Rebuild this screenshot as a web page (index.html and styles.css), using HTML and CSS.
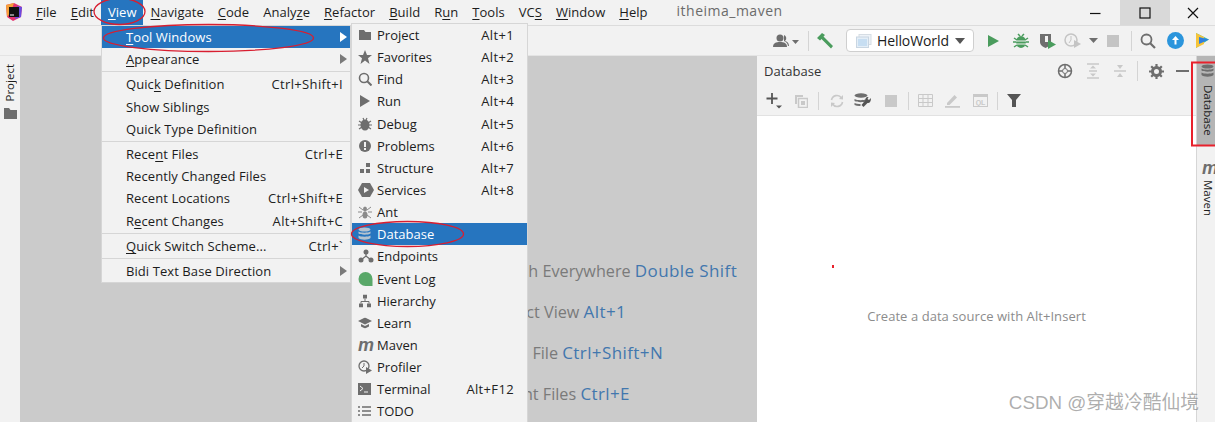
FILE: index.html
```html
<!DOCTYPE html>
<html lang="en">
<head>
<meta charset="utf-8">
<title>itheima_maven</title>
<link rel="stylesheet" href="styles.css">
</head>
<body>
<div class="app">
  <header class="menubar">
    <svg class="logo" width="18" height="18" viewBox="0 0 18 18"><path d="M1 2 L9 0 L17 4 L16 14 L8 18 L2 14Z" fill="#e3326e"/><path d="M1 2 L9 0 L6 9 L2 14Z" fill="#f6a13a"/><path d="M17 4 L16 14 L10 16 L12 3Z" fill="#6a4be0"/><rect x="4" y="4" width="10" height="10" fill="#111"/><rect x="5" y="11.500" width="4" height="1" fill="#fff"/></svg>
    <nav class="menus">
      <span class="menu"><u>F</u>ile</span>
      <span class="menu"><u>E</u>dit</span>
      <span class="menu active"><u>V</u>iew</span>
      <span class="menu"><u>N</u>avigate</span>
      <span class="menu"><u>C</u>ode</span>
      <span class="menu">Analy<u>z</u>e</span>
      <span class="menu"><u>R</u>efactor</span>
      <span class="menu"><u>B</u>uild</span>
      <span class="menu">R<u>u</u>n</span>
      <span class="menu"><u>T</u>ools</span>
      <span class="menu">VC<u>S</u></span>
      <span class="menu"><u>W</u>indow</span>
      <span class="menu"><u>H</u>elp</span>
    </nav>
    <span class="project-title">itheima_maven</span>
    <div class="win-controls">
      <span class="win-btn"><svg width="12" height="12" viewBox="0 0 12 12"><path d="M1 6.500h10.500" stroke="#111" stroke-width="1.200"/></svg></span>
      <span class="win-btn hovered"><svg width="12" height="12" viewBox="0 0 12 12"><rect x="1" y="1" width="10" height="10" fill="none" stroke="#111" stroke-width="1.200"/></svg></span>
      <span class="win-btn"><svg width="12" height="12" viewBox="0 0 12 12"><path d="M1 1l10 10M11 1l-10 10" stroke="#111" stroke-width="1.200"/></svg></span>
    </div>
  </header>

  <div class="toolbar">
    <span class="tool w-user"><svg width="26" height="14" viewBox="0 0 26 14"><circle cx="7" cy="4" r="3.500" fill="#6e6e6e"/><path d="M0 13c0-4 3-5 7-5s7 1 7 5z" fill="#6e6e6e"/><path d="M11 1a3.500 3.500 0 0 1 1 6c2 .5 4 2 4 5h-1c-.5-3-2-4-4-5z" fill="#6e6e6e"/><path d="M19 6h7l-3.500 4z" fill="#6e6e6e"/></svg></span>
    <span class="vsep"></span>
    <span class="tool w-hammer"><svg width="18" height="18" viewBox="0 0 18 18"><path d="M1 6L6 1l3 2-1.500 1.500L17 14l-2 2.500L5.500 7 4 8.500z" fill="#4a9c5d"/></svg></span>
    <div class="run-config">
      <svg width="16" height="14" viewBox="0 0 16 14"><rect x="3" y="0.500" width="12" height="10" fill="#eef3f8" stroke="#d6dde4"/><rect x="0.500" y="3" width="12" height="10.500" fill="#e4eef7" stroke="#c9d6e2"/><rect x="2" y="5" width="9" height="7" fill="#c7def2"/></svg>
      <span class="config-name">HelloWorld</span>
      <svg class="config-arrow" width="10" height="6" viewBox="0 0 10 6"><path d="M0 0h10L5 6z" fill="#555"/></svg>
    </div>
    <span class="tool w-run"><svg width="14" height="14" viewBox="0 0 14 14"><path d="M2 1l11 6-11 6z" fill="#4a9c5d"/></svg></span>
    <span class="tool w-bug"><svg width="16" height="16" viewBox="0 0 16 16"><ellipse cx="8" cy="9" rx="5" ry="6" fill="#4a9c5d"/><path d="M1 5l3 2M15 5l-3 2M0 9h3M16 9h-3M1 14l3-2M15 14l-3-2M5 1l2 2M11 1l-2 2" stroke="#4a9c5d" stroke-width="1.500"/><path d="M3 8h10M3 11h10" stroke="#f2f2f2"/></svg></span>
    <span class="tool w-cov"><svg width="18" height="17" viewBox="0 0 18 17"><path d="M1 2h11v8c0 3-3 5-5.500 6C4 15 1 13 1 10z" fill="#6e6e6e"/><path d="M6 4h3v6H6z" fill="#f2f2f2"/><path d="M9 8l8 4.500-8 4.500z" fill="#4a9c5d"/></svg></span>
    <span class="tool w-prof"><svg width="18" height="16" viewBox="0 0 18 16"><circle cx="7" cy="7" r="6" fill="none" stroke="#c4c4c4" stroke-width="1.500"/><path d="M7 3v4l-2 3" stroke="#c4c4c4" fill="none"/><path d="M10 7l7 4-7 4z" fill="#c4c4c4"/></svg></span>
    <span class="tool w-drop"><svg width="9" height="5" viewBox="0 0 9 5"><path d="M0 0h9L4.500 5z" fill="#6e6e6e"/></svg></span>
    <span class="tool w-stop"><svg width="12" height="12" viewBox="0 0 12 12"><rect width="12" height="12" fill="#c4c4c4"/></svg></span>
    <span class="vsep"></span>
    <span class="tool w-search"><svg width="16" height="16" viewBox="0 0 16 16"><circle cx="6.500" cy="6.500" r="5" fill="none" stroke="#6e6e6e" stroke-width="1.800"/><path d="M10 10l5 5" stroke="#6e6e6e" stroke-width="2.200"/></svg></span>
    <span class="tool w-update"><svg width="17" height="17" viewBox="0 0 17 17"><circle cx="8.500" cy="8.500" r="8.500" fill="#2b95dc"/><path d="M8.500 4l3.500 4H9.500v4.500h-2V8H5z" fill="#fff"/></svg></span>
    <span class="tool w-share"><svg width="15" height="17" viewBox="0 0 15 17"><path d="M1 1l13 6.500L1 16z" fill="#3cc0a0"/><path d="M1 1l8 4v7l-8 4z" fill="#f5c43a"/><path d="M4 5l10 2.500L4 12z" fill="#2f7fe0"/></svg></span>
  </div>

  <main class="workspace">
    <aside class="left-strip">
      <span class="strip-label flip">Project</span>
      <svg width="13" height="11" viewBox="0 0 13 11"><path d="M0 0h5l1.500 2H13v9H0z" fill="#6e6e6e"/></svg>
    </aside>

    <section class="editor">
      <p class="hint">Search Everywhere <span class="key">Double Shift</span></p>
      <p class="hint">Project View <span class="key">Alt+1</span></p>
      <p class="hint">Go to File <span class="key">Ctrl+Shift+N</span></p>
      <p class="hint">Recent Files <span class="key">Ctrl+E</span></p>
    </section>

    <section class="db-panel">
      <div class="panel-head">
        <span class="panel-title">Database</span>
        <div class="panel-actions">
          <svg class="a-target" width="16" height="16" viewBox="0 0 16 16"><circle cx="8" cy="8" r="6.500" fill="none" stroke="#6e6e6e" stroke-width="1.500"/><circle cx="8" cy="8" r="2.500" fill="none" stroke="#6e6e6e"/><path d="M8 1v4M8 11v4M1 8h4M11 8h4" stroke="#6e6e6e" stroke-width="1.500"/></svg>
          <svg class="a-expand" width="14" height="16" viewBox="0 0 14 16"><path d="M1 1h12M1 15h12M3 8h8" stroke="#c9c9c9" stroke-width="1.500"/><path d="M7 2.500l3 3H4zM7 13.500l3-3H4z" fill="#c9c9c9"/></svg>
          <svg class="a-collapse" width="14" height="14" viewBox="0 0 14 14"><path d="M1 7h12" stroke="#c9c9c9" stroke-width="1.500"/><path d="M7 5L4 1h6zM7 9l3 4H4z" fill="#c9c9c9"/></svg>
          <span class="vsep head-sep"></span>
          <svg class="a-gear" width="15" height="15" viewBox="0 0 15 15"><circle cx="7.500" cy="7.500" r="4" fill="none" stroke="#6e6e6e" stroke-width="3"/><path d="M7.500 0v3M7.500 12v3M0 7.500h3M12 7.500h3M2.200 2.200l2 2M10.800 10.800l2 2M12.800 2.200l-2 2M4.200 10.800l-2 2" stroke="#6e6e6e" stroke-width="2.200"/></svg>
          <svg class="a-min" width="13" height="3" viewBox="0 0 13 3"><rect width="13" height="2" fill="#6e6e6e"/></svg>
        </div>
      </div>
      <div class="panel-tools">
        <svg class="t-plus" width="16" height="17" viewBox="0 0 16 17"><path d="M6 1v11M0.500 6.500h11" stroke="#555" stroke-width="1.800"/><path d="M10 13.500h6l-3 3z" fill="#555"/></svg>
        <svg class="t-copy" width="14" height="14" viewBox="0 0 14 14"><path d="M1 1h8v2H3v7H1z" fill="#c9c9c9"/><rect x="4.500" y="4.500" width="9" height="9" fill="none" stroke="#c9c9c9" stroke-width="1.500"/><rect x="7" y="7" width="4" height="4" fill="#c9c9c9"/></svg>
        <span class="vsep tool-sep s1"></span>
        <svg class="t-refresh" width="14" height="14" viewBox="0 0 14 14"><path d="M1.500 6a5.500 5.500 0 0 1 10-2M12.500 8a5.500 5.500 0 0 1-10 2" fill="none" stroke="#c9c9c9" stroke-width="1.600"/><path d="M9 5l4 .5V1zM5 9l-4-.5V13z" fill="#c9c9c9"/></svg>
        <svg class="t-tools" width="18" height="16" viewBox="0 0 18 16"><ellipse cx="7" cy="2.500" rx="6.500" ry="2.200" fill="#6e6e6e"/><path d="M0.500 6c3 1.600 9 1.600 12 0v2c-3 1.600-9 1.600-12 0zM0.500 10c2 1 4 1.200 6 1v2c-2 .2-4 0-6-1z" fill="#6e6e6e"/><path d="M17 5l-2 2-1.500-1 1-2c-2-.5-3.500 1-3 3L7.500 12l2 2 4-4c2 .5 3.500-1 3.500-5z" fill="#555"/></svg>
        <svg class="t-stop" width="12" height="12" viewBox="0 0 12 12"><rect width="12" height="12" fill="#c9c9c9"/></svg>
        <span class="vsep tool-sep s2"></span>
        <svg class="t-table" width="15" height="13" viewBox="0 0 15 13"><path d="M.5.5h14v12H.5zM.5 4.500h14M.5 8.500h14M5 .5v12M10 .5v12" fill="none" stroke="#c9c9c9"/></svg>
        <svg class="t-edit" width="15" height="15" viewBox="0 0 15 15"><path d="M2 10l7.500-8 2.500 2.500L4.500 12H2z" fill="#c9c9c9"/><rect x="0" y="13" width="15" height="1.800" fill="#c9c9c9"/></svg>
        <svg class="t-ql" width="15" height="13" viewBox="0 0 15 13"><rect x=".5" y=".5" width="14" height="12" fill="none" stroke="#c9c9c9"/><rect x=".5" y=".5" width="14" height="2.500" fill="#c9c9c9"/><text x="7.500" y="10.500" class="ql-text">QL</text></svg>
        <span class="vsep tool-sep s3"></span>
        <svg class="t-filter" width="14" height="13" viewBox="0 0 14 13"><path d="M0 0h14L9 6v7H5V6z" fill="#555"/></svg>
      </div>
      <div class="panel-body">Create a data source with Alt+Insert</div>
    </section>

    <aside class="right-strip">
      <div class="strip-tab selected">
        <svg width="13" height="14" viewBox="0 0 13 14"><ellipse cx="6.500" cy="2.500" rx="6" ry="2" fill="#6e6e6e"/><path d="M.5 4.500c2 1.600 10 1.600 12 0v2c-2 1.600-10 1.600-12 0zM.5 8.500c2 1.600 10 1.600 12 0v2.500c-2 2.200-10 2.200-12 0z" fill="#6e6e6e"/></svg>
        <span class="strip-label">Database</span>
      </div>
      <div class="strip-tab">
        <span class="maven-m tab-m">m</span>
        <span class="strip-label">Maven</span>
      </div>
    </aside>
  </main>
</div>

<div class="dropdown view-menu">
  <div class="row selected"><span class="label"><u>T</u>ool Windows</span><i class="arrow light"></i></div>
  <div class="row"><span class="label"><u>A</u>ppearance</span><i class="arrow"></i></div>
  <hr>
  <div class="row"><span class="label">Quic<u>k</u> Definition</span><span class="short">Ctrl+Shift+I</span></div>
  <div class="row"><span class="label">Show Siblings</span></div>
  <div class="row"><span class="label">Quick Type Definition</span></div>
  <hr>
  <div class="row"><span class="label">Rece<u>n</u>t Files</span><span class="short">Ctrl+E</span></div>
  <div class="row"><span class="label">Recently Changed Files</span></div>
  <div class="row"><span class="label">Recent Locations</span><span class="short">Ctrl+Shift+E</span></div>
  <div class="row"><span class="label">R<u>e</u>cent Changes</span><span class="short">Alt+Shift+C</span></div>
  <hr>
  <div class="row"><span class="label"><u>Q</u>uick Switch Scheme...</span><span class="short">Ctrl+`</span></div>
  <hr>
  <div class="row"><span class="label">Bidi Text Base Direction</span><i class="arrow"></i></div>
</div>

<div class="dropdown tool-menu">
  <div class="row"><svg class="ico" width="14" height="12" viewBox="0 0 14 12"><path d="M1 1h5l1.500 2H13v8H1z" fill="#6e6e6e"/></svg><span class="label">Project</span><span class="short">Alt+1</span></div>
  <div class="row"><svg class="ico" width="14" height="14" viewBox="0 0 14 14"><path d="M7 0l2 5h5l-4 3.200L11.500 14 7 10.500 2.500 14 4 8.200 0 5h5z" fill="#6e6e6e"/></svg><span class="label">Favorites</span><span class="short">Alt+2</span></div>
  <div class="row"><svg class="ico" width="14" height="14" viewBox="0 0 14 14"><circle cx="6" cy="6" r="4.500" fill="none" stroke="#6e6e6e" stroke-width="1.600"/><path d="M9 9l4.500 4.500" stroke="#6e6e6e" stroke-width="2"/></svg><span class="label">Find</span><span class="short">Alt+3</span></div>
  <div class="row"><svg class="ico" width="14" height="12" viewBox="0 0 14 12"><path d="M2 0l10 6-10 6z" fill="#6e6e6e"/></svg><span class="label">Run</span><span class="short">Alt+4</span></div>
  <div class="row"><svg class="ico" width="14" height="14" viewBox="0 0 14 14"><ellipse cx="7" cy="8" rx="4.500" ry="5.500" fill="#6e6e6e"/><path d="M1 4l3 2M13 4l-3 2M0 8h3M14 8h-3M1 12l3-2M13 12l-3-2M5 1l1 2M9 1l-1 2" stroke="#6e6e6e" stroke-width="1.200"/></svg><span class="label">Debug</span><span class="short">Alt+5</span></div>
  <div class="row"><svg class="ico" width="14" height="14" viewBox="0 0 14 14"><circle cx="7" cy="7" r="6" fill="#6e6e6e"/><rect x="6" y="3" width="2" height="5" fill="#f2f2f2"/><rect x="6" y="9" width="2" height="2" fill="#f2f2f2"/></svg><span class="label">Problems</span><span class="short">Alt+6</span></div>
  <div class="row"><svg class="ico" width="14" height="12" viewBox="0 0 14 12"><rect x="8" y="1" width="4" height="4" fill="#6e6e6e"/><rect x="2" y="7" width="4" height="4" fill="#6e6e6e"/><rect x="8" y="7" width="4" height="4" fill="#6e6e6e"/></svg><span class="label">Structure</span><span class="short">Alt+7</span></div>
  <div class="row"><svg class="ico" width="16" height="14" viewBox="0 0 16 14"><path d="M4 0h8l4 7-4 7H4L0 7z" fill="#6e6e6e"/><path d="M6 4l5 3-5 3z" fill="#f2f2f2"/></svg><span class="label">Services</span><span class="short">Alt+8</span></div>
  <div class="row"><svg class="ico" width="14" height="14" viewBox="0 0 14 14"><ellipse cx="7" cy="4" rx="2" ry="2.500" fill="#8a8a8a"/><ellipse cx="7" cy="10" rx="2.500" ry="3.500" fill="#8a8a8a"/><path d="M1 2l4 3M13 2L9 5M0 7h4M14 7h-4M1 13l4-3M13 13l-4-3" stroke="#8a8a8a"/></svg><span class="label">Ant</span></div>
  <div class="row selected"><svg class="ico" width="13" height="14" viewBox="0 0 13 14"><ellipse cx="6.500" cy="2.500" rx="6" ry="2" fill="#b4c2cf"/><path d="M.5 4.500c2 1.600 10 1.600 12 0v2c-2 1.600-10 1.600-12 0zM.5 8.500c2 1.600 10 1.600 12 0v2.500c-2 2.200-10 2.200-12 0z" fill="#b4c2cf"/></svg><span class="label">Database</span></div>
  <div class="row"><svg class="ico" width="16" height="14" viewBox="0 0 16 14"><path d="M3 11l5-4 5 4M8 7V3" stroke="#6e6e6e" stroke-width="1.300" fill="none"/><circle cx="8" cy="3" r="2.500" fill="#6e6e6e"/><circle cx="3" cy="11" r="2.500" fill="#6e6e6e"/><circle cx="13" cy="11" r="2.500" fill="#6e6e6e"/></svg><span class="label">Endpoints</span></div>
  <div class="row"><svg class="ico" width="15" height="14" viewBox="0 0 15 14"><path d="M7.500 0a7 7 0 0 1 7 7v7h-7a7 7 0 0 1 0-14z" fill="#59a869"/></svg><span class="label">Event Log</span></div>
  <div class="row"><svg class="ico" width="14" height="13" viewBox="0 0 14 13"><rect x="5" y="0" width="4" height="4" fill="#6e6e6e"/><rect x="1" y="9" width="4" height="4" fill="#6e6e6e"/><rect x="9" y="9" width="4" height="4" fill="#6e6e6e"/><path d="M7 4v3M3 9V7h8v2" stroke="#6e6e6e" fill="none"/></svg><span class="label">Hierarchy</span></div>
  <div class="row"><svg class="ico" width="14" height="11" viewBox="0 0 14 11"><path d="M7 0l7 3.500L7 7 0 3.500z" fill="#6e6e6e"/><path d="M3 6.500L7 8.500l4-2V9l-4 2-4-2z" fill="#6e6e6e"/></svg><span class="label">Learn</span></div>
  <div class="row"><span class="ico maven-m">m</span><span class="label">Maven</span></div>
  <div class="row"><svg class="ico" width="15" height="14" viewBox="0 0 15 14"><circle cx="6" cy="6" r="5" fill="none" stroke="#6e6e6e" stroke-width="1.300"/><path d="M6 3v3l-2 2" stroke="#6e6e6e" fill="none"/><path d="M8 7l6 3.500L8 14z" fill="#6e6e6e"/></svg><span class="label">Profiler</span></div>
  <div class="row"><svg class="ico" width="13" height="12" viewBox="0 0 13 12"><rect width="13" height="12" fill="#6e6e6e"/><path d="M2 3l3 2.500L2 8" stroke="#f2f2f2" fill="none"/><path d="M6 9h4" stroke="#f2f2f2"/></svg><span class="label">Terminal</span><span class="short">Alt+F12</span></div>
  <div class="row"><svg class="ico" width="13" height="10" viewBox="0 0 13 10"><path d="M0 1h2M4 1h9M0 5h2M4 5h9M0 9h2M4 9h9" stroke="#6e6e6e" stroke-width="1.400"/></svg><span class="label">TODO</span></div>
</div>

<svg class="annotations" width="1215" height="422" viewBox="0 0 1215 422">
  <ellipse cx="119.500" cy="11.500" rx="25.500" ry="13" class="mark"/>
  <ellipse cx="208.500" cy="38" rx="105" ry="13.500" class="mark"/>
  <ellipse cx="407.500" cy="234" rx="56" ry="12.500" class="mark"/>
  <rect x="1192" y="62.500" width="30" height="83" class="mark-rect"/>
  <rect x="832" y="265" width="2" height="3" fill="#e8212c"/>
</svg>
<div class="watermark">CSDN @穿越冷酷仙境</div>
</body>
</html>
```
FILE: styles.css
```css
* { box-sizing: border-box; }
html, body { margin: 0; height: 100%; overflow: hidden; }
body {
  width: 1215px;
  height: 422px;
  position: relative;
  background: #f2f2f2;
  color: #1c1c1c;
  font: 13px/18px "Open Sans", "Noto Sans", sans-serif;
}
u { text-underline-offset: 2px; }
p { margin: 0; }

.app { display: flex; flex-direction: column; height: 422px; }

.menubar {
  flex: 0 0 26px;
  display: flex;
  align-items: stretch;
  padding-left: 5px;
  border-bottom: 1px solid #dcdcdc;
  background: #f2f2f2;
}
.logo { align-self: center; margin-right: 6px; margin-bottom: 2px; }
.menus { display: flex; margin-top: 0; }
.menu { padding: 3px 7px 0 7px; white-space: nowrap; letter-spacing: .03px; }
.menu.active { background: #2675bf; color: #fff; }
.project-title { padding: 2px 0 0 22px; color: #6b6b6b; font-size: 14px; letter-spacing: .5px; }
.win-controls { display: flex; margin-left: auto; }
.win-btn { width: 50px; height: 25px; display: flex; align-items: center; justify-content: center; }
.win-btn.hovered { background: #d9d9d9; }
.win-controls .win-btn:last-child { width: 45px; }

.toolbar {
  flex: 0 0 30px;
  display: flex;
  align-items: center;
  justify-content: flex-end;
  border-bottom: 1px solid #e4e4e4;
  background: #f2f2f2;
}
.tool { display: flex; align-items: center; justify-content: center; }
.vsep { width: 1px; height: 20px; background: #d4d4d4; display: block; }
.w-user { width: 28px; margin-right: 8px; }
.w-hammer { width: 26px; margin: 0 8px 0 3px; }
.run-config {
  width: 128px;
  height: 23px;
  margin-right: 6px;
  padding: 0 8px 0 9px;
  display: flex;
  align-items: center;
  background: #fff;
  border: 1px solid #cfcfcf;
  border-radius: 4px;
}
.config-name { margin-left: 5px; font-size: 14px; letter-spacing: -.1px; }
.config-arrow { margin-left: auto; }
.w-run { width: 26px; }
.w-bug { width: 29px; }
.w-cov { width: 26px; }
.w-prof { width: 24px; }
.w-drop { width: 17px; }
.w-stop { width: 22px; margin-right: 7px; }
.w-search { width: 31px; }
.w-update { width: 25px; }
.w-share { width: 27px; padding-left: 2px; }

.workspace { flex: 1; display: flex; min-height: 0; }

.left-strip {
  flex: 0 0 20px;
  display: flex;
  flex-direction: column;
  align-items: center;
  gap: 6px;
  padding-top: 8px;
  color: #1c1c1c;
}
.strip-label { writing-mode: vertical-rl; font-size: 11.500px; line-height: 14px; }
.strip-label.flip { transform: rotate(180deg); }

.editor {
  flex: 0 0 737px;
  background: #cbcbcb;
  padding: 204px 0 0 467px;
  display: flex;
  flex-direction: column;
  gap: 19px;
}
.hint { font-size: 16.200px; line-height: 22px; color: #7a7a7a; white-space: nowrap; }
.key { color: #4277ae; font-size: 17px; letter-spacing: .4px; }

.db-panel { flex: 0 0 439px; display: flex; flex-direction: column; }
.panel-head { flex: 0 0 30px; display: flex; align-items: center; padding-left: 7px; }
.panel-title { color: #333; }
.panel-actions { margin-left: auto; display: flex; align-items: center; }
.a-target { margin-right: 13px; }
.a-expand { margin-right: 13px; }
.a-collapse { margin-right: 10px; }
.head-sep { margin-right: 11px; }
.a-gear { margin-right: 12px; }
.a-min { margin-right: 7px; }

.panel-tools {
  flex: 0 0 30px;
  display: flex;
  align-items: center;
  padding-left: 9px;
  border-bottom: 1px solid #e2e2e2;
}
.tool-sep { height: 18px; }
.t-plus { margin-right: 12px; }
.t-copy { margin-right: 10px; }
.s1 { margin-right: 11px; }
.t-refresh { margin-right: 10px; }
.t-tools { margin-right: 13px; }
.t-stop { margin-right: 11px; }
.s2 { margin-right: 9px; }
.t-table { margin-right: 12px; }
.t-edit { margin-right: 13px; }
.t-ql { margin-right: 9px; }
.s3 { margin-right: 9px; }
.ql-text { font: 700 7px "Liberation Sans", sans-serif; fill: #c9c9c9; text-anchor: middle; }
.panel-body {
  flex: 1;
  background: #fff;
  padding-top: 191px;
  text-align: center;
  color: #8c8c8c;
  letter-spacing: .06px;
}

.right-strip { flex: 0 0 19px; border-left: 1px solid #d6d6d6; display: flex; flex-direction: column; }
.strip-tab { display: flex; flex-direction: column; align-items: center; gap: 5px; padding-top: 8px; }
.strip-tab.selected { background: #b5b5b5; height: 89px; margin-bottom: 8px; gap: 7px; padding-top: 8px; }
.tab-m { height: 14px; line-height: 14px; margin-left: 5px; }
.maven-m { font: italic 700 18px/14px "Liberation Sans", sans-serif; color: #6e6e6e; }

.dropdown {
  position: absolute;
  background: #f2f2f2;
  border: 1px solid #d6d6d6;
}
.view-menu { left: 101px; top: 25px; width: 250px; letter-spacing: .08px; }
.tool-menu { left: 351px; top: 23px; width: 177px; bottom: 0; border-bottom: 0; overflow: hidden; }
.row {
  height: 22px;
  display: flex;
  align-items: center;
  position: relative;
  white-space: nowrap;
}
.view-menu .row { padding: 0 7px 0 24px; height: 22.200px; }
.tool-menu .row { padding: 0 13px 0 25px; height: 22.150px; }
.row.selected { background: #2675bf; color: #fff; }
.short { margin-left: auto; color: #222; letter-spacing: .35px; }
.dropdown hr { height: 3px; margin: 0; border: 0; border-top: 1px solid #d6d6d6; position: relative; top: 1px; }
.arrow { margin-left: auto; border-left: 7px solid #7a7a7a; border-top: 5px solid transparent; border-bottom: 5px solid transparent; margin-right: -4px; }
.arrow.light { border-left-color: #fff; }
.ico {
  position: absolute;
  left: 6px;
  top: 50%;
  transform: translateY(-50%);
}

.annotations { position: absolute; left: 0; top: 0; pointer-events: none; overflow: hidden; }
.mark { fill: none; stroke: #d81e30; stroke-width: 1.300; }
.mark-rect { fill: none; stroke: #e8212c; stroke-width: 2; }
.watermark {
  position: absolute;
  right: 16px;
  bottom: 8px;
  font: 18.800px/22px "Liberation Sans", "Noto Sans CJK SC", sans-serif;
  color: rgba(120, 120, 120, 0.6);
}
```
